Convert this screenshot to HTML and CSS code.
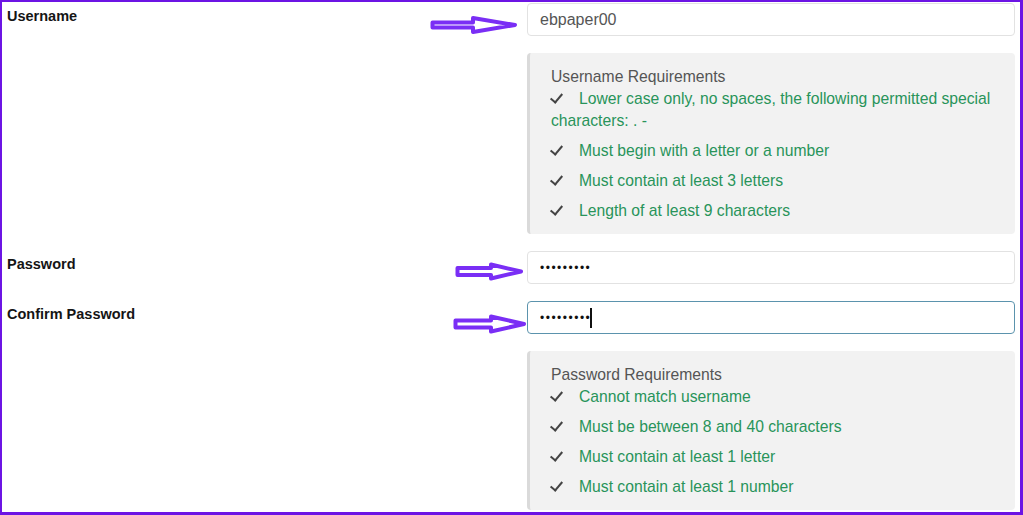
FILE: index.html
```html
<!DOCTYPE html>
<html lang="en">
<head>
  <meta charset="UTF-8">
  <title>Create Account</title>
  <link rel="stylesheet" href="styles.css">
</head>
<body>

  <div class="frame">

    <div class="form-row">
      <label class="field-label" for="username">Username</label>
      <div class="field">
        <svg class="arrow arrow-1" width="87" height="20" viewBox="0 0 87 20">
          <path d="M2.5 7.5 H43 V3 L85 10 L43 17 V12.5 H2.5 Z" />
        </svg>
        <input class="text-input" id="username" type="text" value="ebpaper00">
      </div>
    </div>

    <div class="form-row">
      <div></div>
      <div class="requirements">
        <div class="req-title">Username Requirements</div>
        <ul class="req-list">
          <li><span class="check"></span>Lower case only, no spaces, the following permitted special characters: . -</li>
          <li><span class="check"></span>Must begin with a letter or a number</li>
          <li><span class="check"></span>Must contain at least 3 letters</li>
          <li><span class="check"></span>Length of at least 9 characters</li>
        </ul>
      </div>
    </div>

    <div class="form-row">
      <label class="field-label" for="password">Password</label>
      <div class="field">
        <svg class="arrow arrow-2" width="68" height="19" viewBox="0 0 68 19">
          <path d="M2.5 6 H36 V2.5 L66 9.5 L36 16.5 V13 H2.5 Z" />
        </svg>
        <input class="text-input" id="password" type="password" value="secret123">
      </div>
    </div>

    <div class="form-row">
      <label class="field-label" for="confirm">Confirm Password</label>
      <div class="field">
        <svg class="arrow arrow-3" width="73" height="20" viewBox="0 0 73 20">
          <path d="M2.5 6.5 H38 V2.5 L71 10 L38 17.5 V13.5 H2.5 Z" />
        </svg>
        <input class="text-input is-focused" id="confirm" type="password" value="secret123">
        <span class="caret"></span>
      </div>
    </div>

    <div class="form-row">
      <div></div>
      <div class="requirements">
        <div class="req-title">Password Requirements</div>
        <ul class="req-list">
          <li><span class="check"></span>Cannot match username</li>
          <li><span class="check"></span>Must be between 8 and 40 characters</li>
          <li><span class="check"></span>Must contain at least 1 letter</li>
          <li><span class="check"></span>Must contain at least 1 number</li>
        </ul>
      </div>
    </div>

  </div>

</body>
</html>
```

FILE: styles.css
```css
html, body {
  margin: 0;
  height: 100%;
  background-color: #fff;
}

body {
  font-family: "Liberation Sans", Arial, sans-serif;
  overflow: hidden;
}

.frame {
  box-sizing: border-box;
  height: 515px;
  border: 2px solid #6c14e4;
  border-right-width: 3px;
  border-bottom-width: 3px;
  padding: 1px 5px 0 5px;
  display: flex;
  flex-direction: column;
  gap: 17px;
  overflow: hidden;
}

.form-row {
  display: grid;
  grid-template-columns: 1fr 488px;
}

.field-label {
  padding-top: 5px;
  font-size: 14.5px;
  font-weight: bold;
  color: #151515;
}

.field {
  position: relative;
}

.text-input {
  box-sizing: border-box;
  display: block;
  width: 100%;
  height: 33px;
  padding: 0 12px;
  border: 1px solid #e2e2e2;
  border-radius: 4px;
  font-family: "Liberation Sans", Arial, sans-serif;
  font-size: 16px;
  color: #555;
  outline: none;
}

.text-input[type="password"] {
  font-size: 12px;
  letter-spacing: 1.5px;
  color: #111;
}

.text-input.is-focused,
.text-input:focus {
  border-color: #5b93ad;
}

.caret {
  position: absolute;
  left: 63px;
  top: 7px;
  width: 1.5px;
  height: 20px;
  background-color: #111;
}

.arrow {
  position: absolute;
  overflow: visible;
}

.arrow path {
  fill: #fff;
  stroke: #7a2ef5;
  stroke-width: 4;
  stroke-linejoin: round;
}

.arrow-1 {
  right: calc(100% + 10px);
  top: 12px;
}

.arrow-2 {
  right: calc(100% + 4px);
  top: 11px;
}

.arrow-3 {
  right: calc(100% + 1px);
  top: 13px;
}

.requirements {
  padding: 13px 20px 12px 21px;
  background-color: #f2f2f2;
  border-left: 3px solid #dadada;
  border-radius: 4px;
  font-size: 15.7px;
  line-height: 22px;
}

.req-title {
  color: #555;
}

.req-list {
  list-style: none;
  margin: 0;
  padding: 0;
}

.req-list li {
  color: #28945a;
}

.req-list li + li {
  margin-top: 8px;
}

.check {
  display: inline-block;
  width: 28px;
  height: 10px;
  position: relative;
}

.check::before {
  content: "";
  position: absolute;
  left: 2px;
  top: -3px;
  width: 5px;
  height: 10px;
  border-right: 2.2px solid #444;
  border-bottom: 2.2px solid #444;
  transform: rotate(40deg);
}
```
